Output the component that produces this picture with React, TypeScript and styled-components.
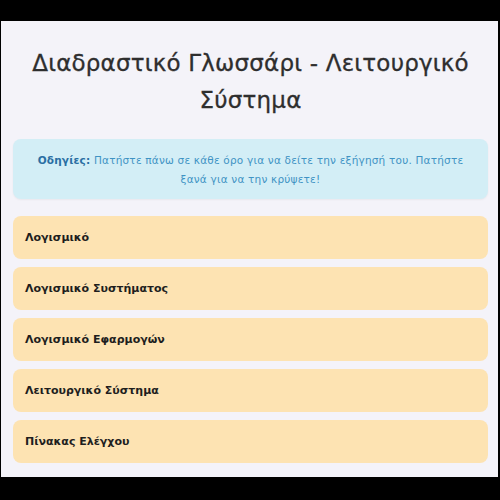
import styled, { createGlobalStyle } from 'styled-components'

const terms = ['Λογισμικό', 'Λογισμικό Συστήματος', 'Λογισμικό Εφαρμογών', 'Λειτουργικό Σύστημα', 'Πίνακας Ελέγχου']

const Global = createGlobalStyle`
  html, body {
    margin: 0;
    padding: 0;
    background: #000000;
  }
  #root {
    padding: 21px 2px 0 1px;
  }
`

const Panel = styled.div`
  box-sizing: border-box;
  width: 497px;
  height: 456px;
  background: #f4f3f9;
  padding: 0 10px 0 12px;
  overflow: hidden;
  font-family: 'DejaVu Sans', 'Noto Sans', sans-serif;
`

const Title = styled.h1`
  margin: 0;
  padding: 24px 0 0 0;
  text-align: center;
  font-size: 23px;
  line-height: 37px;
  font-weight: 500;
  color: #2e2e2e;
  letter-spacing: 0.2px;
  -webkit-text-stroke: 0.3px #2e2e2e;
`

const Instructions = styled.div`
  box-sizing: border-box;
  margin-top: 20px;
  height: 60px;
  padding: 12px 16px 0;
  background: #d3eef6;
  border-radius: 8px;
  box-shadow: 0 1px 2px rgba(0, 0, 0, 0.05);
  text-align: center;
  font-size: 10.5px;
  line-height: 19px;
  color: #3f93c4;
  letter-spacing: 0.2px;
`

const Label = styled.strong`
  color: #2a6ea3;
  font-weight: 700;
`

const List = styled.div`
  display: flex;
  flex-direction: column;
  gap: 8px;
  margin-top: 17px;
`

const Term = styled.div`
  box-sizing: border-box;
  height: 43px;
  display: flex;
  align-items: center;
  padding: 0 12px;
  background: #fde3b2;
  border-radius: 8px;
  font-size: 11px;
  font-weight: 700;
  color: #1e1e1e;
  cursor: pointer;
`

export default function App() {
  return (
    <>
      <Global />
      <Panel>
        <Title>
          Διαδραστικό Γλωσσάρι - Λειτουργικό
          <br />
          Σύστημα
        </Title>
        <Instructions>
          <Label>Οδηγίες:</Label> Πατήστε πάνω σε κάθε όρο για να δείτε την εξήγησή του. Πατήστε ξανά για να την
          κρύψετε!
        </Instructions>
        <List>
          {terms.map((t) => (
            <Term key={t}>{t}</Term>
          ))}
        </List>
      </Panel>
    </>
  )
}
